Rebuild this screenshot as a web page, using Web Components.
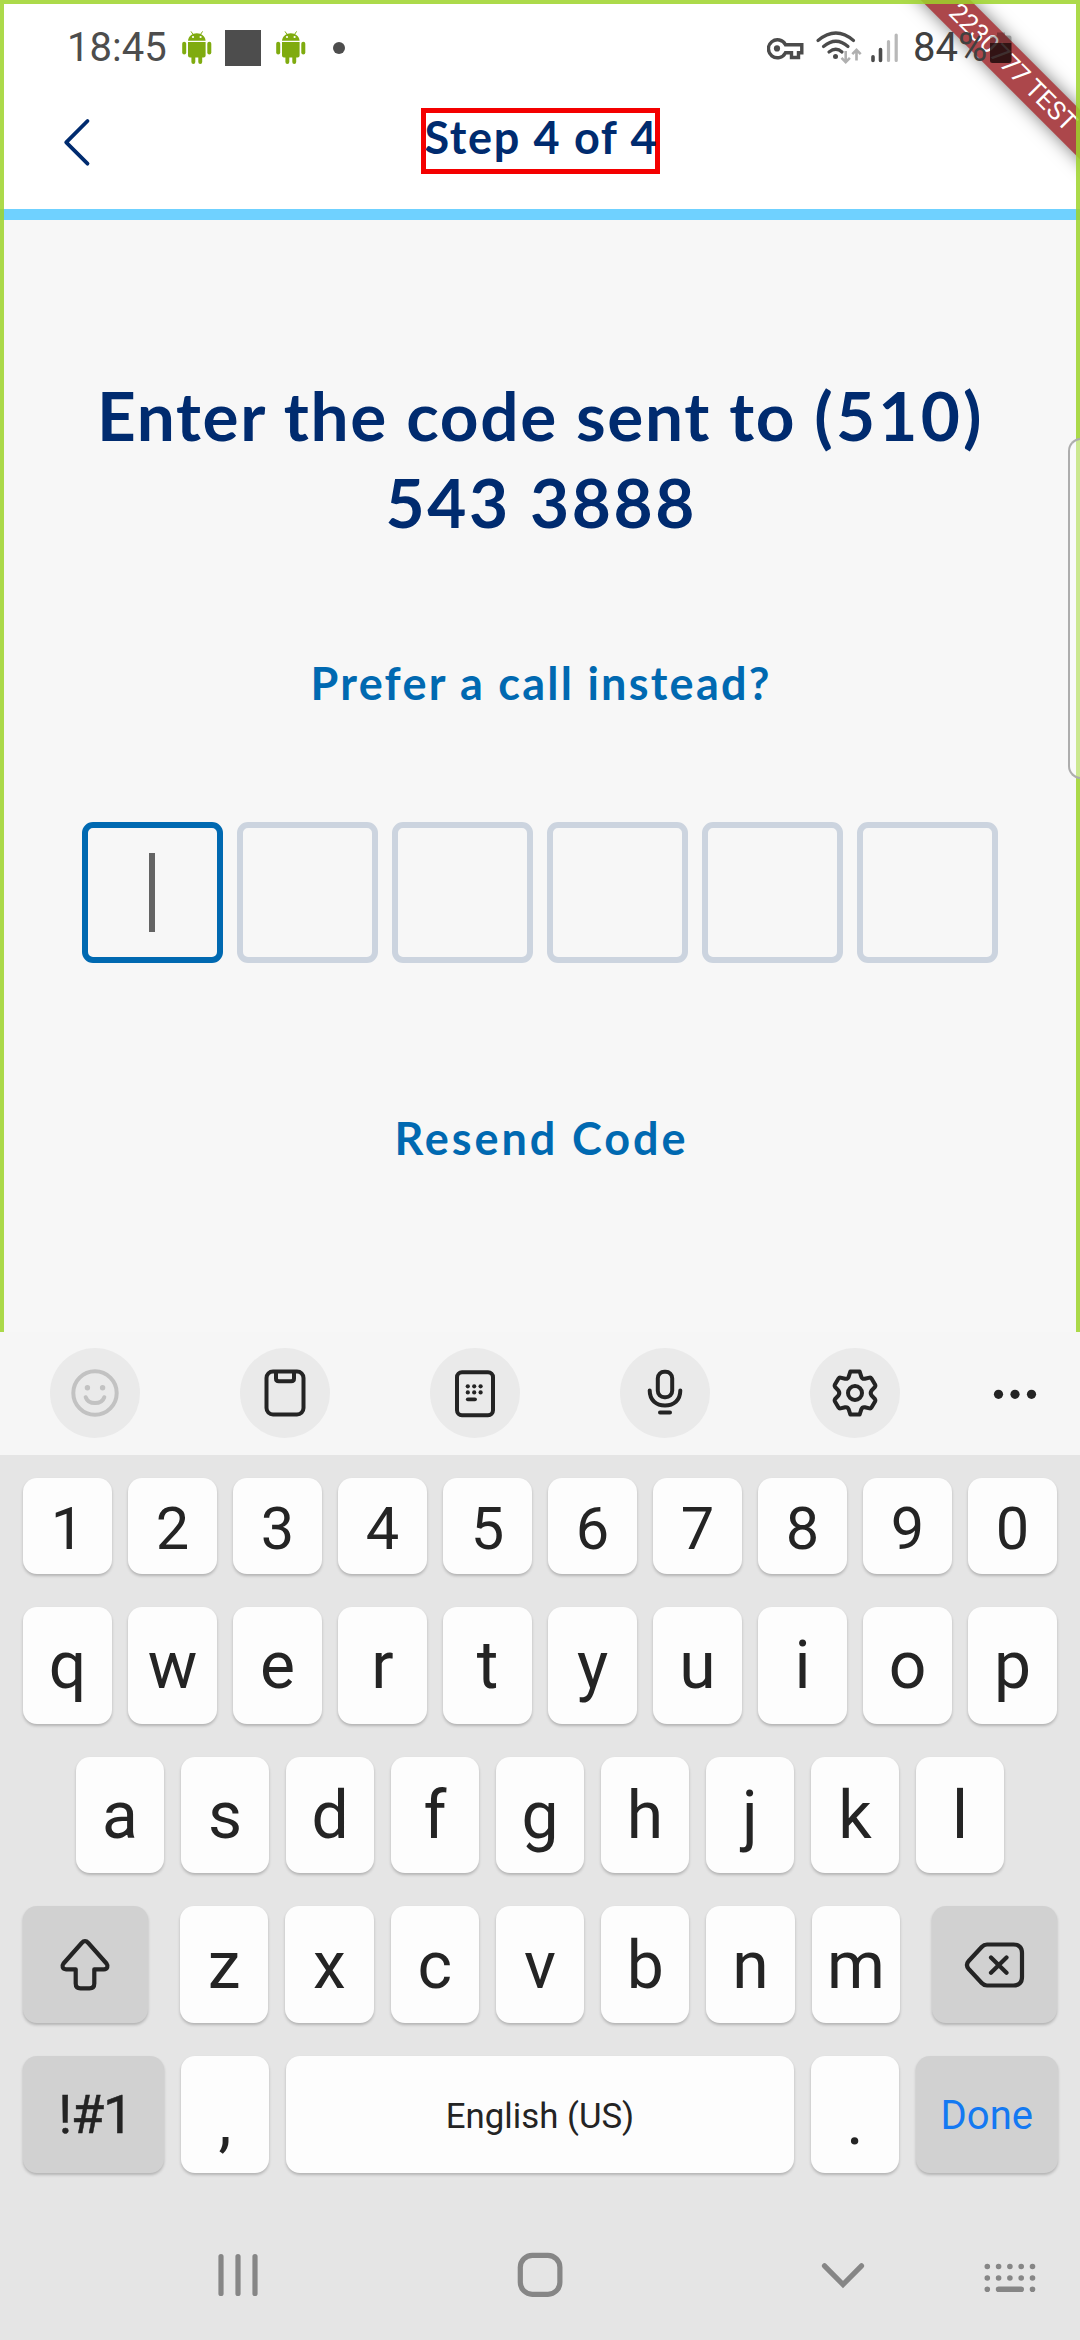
<!DOCTYPE html>
<html lang="en">
<head>
<meta charset="utf-8">
<title>Verification code</title>
<style>
html,body{margin:0;padding:0;background:#e5e5e5}
body{width:1080px;height:2340px;overflow:hidden;font-family:Roboto,"Liberation Sans",sans-serif}
</style>
</head>
<body>
<phone-screen></phone-screen>
<script>
const define = (name, html, setup) => {
  const t = document.createElement('template');
  t.innerHTML = html;
  customElements.define(name, class extends HTMLElement {
    connectedCallback() {
      if (this.shadowRoot) return;
      this.attachShadow({mode: 'open'}).appendChild(t.content.cloneNode(true));
      if (setup) setup(this, this.shadowRoot);
    }
  });
};

/* One line of brand type, tracked out to a given width. */
define('brand-text', `
<style>
:host{display:block;white-space:nowrap;font-family:Lato,"Open Sans",sans-serif;font-weight:700;text-align:center}
span{display:inline-block;letter-spacing:var(--track,0px)}
</style><span><slot></slot></span>`, (el, root) => {
  const span = root.querySelector('span');
  const n = el.textContent.length - 1;
  const s = (Number(el.getAttribute('width')) - span.getBoundingClientRect().width) / n;
  span.style.setProperty('--track', s + 'px');
  span.style.marginRight = -s + 'px';
});

define('android-icon', `
<style>:host{display:block;width:30px;height:34px}svg{display:block}</style>
<svg width="30" height="34" viewBox="0 0 30 34" fill="#7fab0f">
<path d="M6 9.8C6.3 5.400 10 2.200 14.800 2.200s8.500 3.200 8.800 7.600z"/>
<path d="M9 .4l2 3M20.600 .4l-2 3" stroke="#7fab0f" stroke-width="1"/>
<circle cx="11" cy="6" r="1.100" fill="#fff"/><circle cx="18.600" cy="6" r="1.100" fill="#fff"/>
<path d="M6 11h17.600v13.500a2 2 0 0 1-2 2h-1.400v4.600a1.900 1.900 0 0 1-3.900 0v-4.600h-3v4.600a1.900 1.900 0 0 1-3.900 0v-4.600H8a2 2 0 0 1-2-2z"/>
<rect x=".2" y="10.800" width="4" height="12.600" rx="2"/><rect x="25.300" y="10.800" width="4" height="12.600" rx="2"/>
</svg>`);

define('status-bar', `
<style>
:host{display:flex;position:relative;z-index:2;height:96px;align-items:center;padding-left:67px;box-sizing:border-box;color:#4d4d4d;font-size:40px;line-height:96px}
svg{display:block;flex:none}
.time{width:100px}.a{margin-left:15px}.sq{width:36px;height:36px;background:#4d4d4d;margin-left:13px}
.dot{width:12px;height:12px;border-radius:50%;background:#4d4d4d;margin-left:27px}
.net{margin-left:422px}.pct{margin-left:15px;width:75px;color:#404040}
.bat{margin-left:1.500px}
</style>
<div class="time">18:45</div>
<android-icon class="a"></android-icon><div class="sq"></div><android-icon class="a"></android-icon><div class="dot"></div>
<svg class="net" width="131" height="96" viewBox="767 0 131 96" fill="none" stroke="#4b4b4b">
<path d="M785.500 44.800A9 9 0 1 0 785.500 52.800H791.500V57.500H798.500V52.800H801.800V44.800Z" stroke-width="3.400"/>
<circle cx="777" cy="48.400" r="3.100" fill="#4b4b4b" stroke="none"/>
<path d="M818 40.500Q836 25.500 853.500 40.500M823.500 46.500Q836 36 848 46.500M829 52Q836 46.500 842 52" stroke-width="3.200" stroke-linecap="round"/>
<circle cx="835.500" cy="56.500" r="2.500" fill="#4b4b4b" stroke="none"/>
<path d="M845.700 51v11M841.500 57.800l4.200 4.300l4.200-4.300M856.500 60.500v-11M852.300 54.200l4.200-4.300l4.200 4.300" stroke="#b0b0b0" stroke-width="2.600"/>
<path d="M873 56.800v3.600M880.500 49.500v10.900" stroke-width="3.600" stroke-linecap="round"/>
<path d="M888.500 41.500v18.900M896.200 35v25.400" stroke="#b8b8b8" stroke-width="3.200" stroke-linecap="round"/>
</svg>
<div class="pct">84%</div>
<svg class="bat" width="24" height="96" viewBox="992 0 24 96">
<path d="M992 43v-5.500q0-2 2-2h5v-3h8v3h4.500q2 0 2 2v5.500z" fill="#000" opacity=".28"/>
<path d="M992 43h21.500v17.500q0 2.500-2.500 2.500h-16.500q-2.500 0-2.500-2.500z" fill="#1c0a0b" opacity=".85"/>
</svg>`);

define('build-ribbon', `
<style>
:host{position:absolute;z-index:1;right:0;top:0;width:240px;height:200px;overflow:hidden}
div{position:absolute;left:3px;top:50px;width:340px;height:35px;line-height:35px;transform:rotate(45deg);background:#ac474b;box-shadow:0 0 17px rgba(0,0,0,.5);color:#fff;font-size:25.800px;text-align:center;white-space:nowrap}
</style><div><slot></slot></div>`);

define('app-header', `
<style>
:host{display:flex;height:113px;align-items:flex-start;box-sizing:border-box;padding-left:60px}
svg{display:block;margin-top:19px}
.title{margin-left:325.500px;margin-top:12px;width:239px;height:66px;box-sizing:border-box;border:5px solid #f40000;color:#002b6f;font-size:45px;line-height:48px}
brand-text{margin-left:-1px}
</style>
<svg width="35" height="56" viewBox="60 115 35 56" fill="none" stroke="#002b6f" stroke-width="3.800" stroke-linecap="round" stroke-linejoin="round"><path d="M87.500 121L66.200 142.300L87.500 163.700"/></svg>
<div class="title"><brand-text width="232">Step 4 of 4</brand-text></div>`);

define('code-cell', `
<style>
:host{display:flex;flex:1;height:141px;box-sizing:border-box;border:6px solid #ccd4df;border-radius:11px;align-items:center;justify-content:center}
:host([active]){border-color:#0069b1}
i{display:none;width:6px;height:79px;background:#646464;margin-right:1px}
:host([active]) i{display:block}
</style><i></i>`);

define('verify-screen', `
<style>
:host{display:flex;flex-direction:column;height:1112px;background:#f7f7f7;border-top:11px solid #6fd1ff;color:#0069b1;box-sizing:content-box}
h1{margin:152px 0 0;font-size:67.500px;line-height:86.500px;color:#002b6f;font-weight:700}
h1 b{font-weight:inherit;letter-spacing:calc(var(--track,0px) + 1.500px)}
.l{font-size:45px;line-height:60px}
.call{margin-top:108px}
.cells{display:flex;gap:14.500px;margin:109px 82px 0 82.300px}
.resend{margin-top:145px}
</style>
<h1><brand-text width="886">Enter the code sent to <b>(510)</b></brand-text><brand-text width="309">543 3888</brand-text></h1>
<brand-text class="l call" width="459">Prefer a call instead?</brand-text>
<div class="cells"><code-cell active></code-cell><code-cell></code-cell><code-cell></code-cell><code-cell></code-cell><code-cell></code-cell><code-cell></code-cell></div>
<brand-text class="l resend" width="291">Resend Code</brand-text>`);

define('tool-button', `
<style>:host{display:block;width:90px;height:90px;border-radius:50%;background:#eaeaea}</style><slot></slot>`);

define('key-toolbar', `
<style>
:host{display:flex;height:123px;box-sizing:border-box;padding:16px 0 0 50px;gap:100px;background:#f6f6f6}
svg{display:block;fill:none;stroke:#242424;stroke-width:4;stroke-linecap:round;stroke-linejoin:round}
.f{fill:#242424;stroke:none}
.more{margin-left:-10px}
</style>
<tool-button><svg width="90" height="90" viewBox="-45 -45 90 90" style="stroke:#c2c2c2"><circle r="21.700"/><path d="M-9.300 4.200C-6.500 12 6.500 12 9.300 4.200"/><g fill="#c2c2c2" stroke="none"><circle cx="-7.600" cy="-5.200" r="2.700"/><circle cx="7.600" cy="-5.200" r="2.700"/></g></svg></tool-button>
<tool-button><svg width="90" height="90" viewBox="-45 -45 90 90"><rect x="-18.500" y="-21.500" width="37" height="43" rx="6.500"/><path d="M-9 -21V-14.500Q-9 -11.700-6.200 -11.700H6.200Q9 -11.700 9 -14.500V-21"/></svg></tool-button>
<tool-button><svg width="90" height="90" viewBox="-45 -45 90 90"><rect x="-18" y="-20.800" width="36" height="43" rx="5"/><path d="M-7.200 6.300H0" stroke-width="3.800"/><g class="f"><circle cx="-7.200" cy="-6.700" r="2.100"/><circle cx="-.8" cy="-6.700" r="2.100"/><circle cx="5.600" cy="-6.700" r="2.100"/><circle cx="-7.200" cy="-.6" r="2.100"/><circle cx="-.8" cy="-.6" r="2.100"/><circle cx="5.600" cy="-.6" r="2.100"/></g></svg></tool-button>
<tool-button><svg width="90" height="90" viewBox="-45 -45 90 90"><rect x="-7.200" y="-21.300" width="14.400" height="25.500" rx="6.500"/><path d="M-15.300 -2.500C-15.300 7.500-8.500 12.400 0 12.400S15.300 7.500 15.300 -2.500M-5 19.600H5"/></svg></tool-button>
<tool-button><svg width="90" height="90" viewBox="-45 -45 90 90" stroke-width="3.800"><circle r="7"/><path d="M-4.600 -21.600H4.600L6.300 -16.300Q7.300 -13.800 9.800 -14.200L14.600 -15.400Q15.800 -15.600 16.500 -14.500L20.200 -8.300Q20.700 -7.200 20 -6.200L16.500 -2.300Q14.900 0 16.500 2.300L20 6.200Q20.700 7.200 20.200 8.300L16.500 14.500Q15.800 15.600 14.600 15.400L9.800 14.200Q7.300 13.800 6.300 16.300L4.600 21.600H-4.600L-6.300 16.300Q-7.300 13.800-9.800 14.200L-14.600 15.400Q-15.800 15.600-16.500 14.500L-20.200 8.300Q-20.700 7.200-20 6.200L-16.500 2.300Q-14.900 0-16.500 -2.300L-20 -6.200Q-20.700 -7.200-20.200 -8.300L-16.500 -14.500Q-15.800 -15.600-14.600 -15.400L-9.800 -14.200Q-7.300 -13.800-6.300 -16.300Z"/></svg></tool-button>
<svg class="more" width="50" height="90" viewBox="-25 -45 50 90"><g class="f"><circle cx="-16.500" cy="1.300" r="4.600"/><circle cy="1.300" r="4.600"/><circle cx="16.500" cy="1.300" r="4.600"/></g></svg>`);

define('key-cap', `
<style>
:host{display:flex;flex:1;justify-content:center;align-items:center;box-sizing:border-box;padding-top:var(--drop,2px);background:#fdfdfd;border-radius:14px;box-shadow:0 2px 3px rgba(0,0,0,.22);color:#242424;white-space:nowrap}
:host([dark]){background:#d1d1d1}
</style><slot></slot>`);

define('key-row', `
<style>:host{display:flex;gap:16px}</style><slot></slot>`, el => {
  const keys = el.getAttribute('keys');
  if (keys) for (const k of keys) {
    const cap = document.createElement('key-cap');
    cap.textContent = k;
    el.insertBefore(cap, el.querySelector('[data-end]'));
  }
});

define('soft-keyboard', `
<style>
:host{display:flex;flex-direction:column;height:776px;background:#e5e5e5;padding-top:22.500px;box-sizing:border-box;gap:33px}
key-row{margin:0 23px;height:116.700px;font-size:66px;line-height:80px;flex:none}
.num{height:96.500px;font-size:59.500px;--drop:7px}
.home{margin:0 76px;gap:17px}
.low{margin:0 22.500px;gap:17px}
.side{flex:none;width:125.500px;--drop:0px}
svg{display:block;fill:none;stroke:#242424;stroke-width:4.200;stroke-linecap:round;stroke-linejoin:round}
.shift{margin-right:15px}.bk{margin-left:15px}
.wide{flex:none;width:141.500px}
.p{flex:none;width:88px;--drop:15px}
.sym span{font-size:54px;letter-spacing:-1.200px;padding-left:4px;-webkit-text-stroke:.5px #242424}
.space{font-size:34.800px;--drop:3px}
.done{font-size:40px;color:#1479f2;--drop:4px}
</style>
<key-row class="num" keys="1234567890"></key-row>
<key-row keys="qwertyuiop"></key-row>
<key-row class="home" keys="asdfghjkl"></key-row>
<key-row class="low" keys="zxcvbnm">
<key-cap dark class="side shift"><svg width="60" height="60" viewBox="-30 -30 60 60"><path d="M-3.300 -22Q0 -25.600 3.300 -22L21.500 -1.500Q23 .5 22.300 2.300Q21.500 4.300 19 4.300H9.300V18.500Q9.300 23.300 4.500 23.300H-4.500Q-9.300 23.300-9.300 18.500V4.300H-19Q-21.500 4.300-22.300 2.300Q-23 .5-21.500 -1.500Z"/></svg></key-cap>
<key-cap dark class="side bk" data-end><svg width="64" height="60" viewBox="-32 -30 64 60"><path d="M-8 -20.500H18.500Q27 -20.500 27 -12V12Q27 20.500 18.500 20.500H-8Q-11 20.500-13.300 18L-26.300 4Q-29.800 0-26.300 -4L-13.300 -18Q-11 -20.500-8 -20.500ZM-4 -7.500L11.500 7.800M11.500 -7.500L-4 7.800"/></svg></key-cap>
</key-row>
<key-row class="low">
<key-cap dark class="wide sym"><span>!#1</span></key-cap><key-cap class="p">,</key-cap><key-cap class="space">English (US)</key-cap><key-cap class="p">.</key-cap><key-cap dark class="wide done">Done</key-cap>
</key-row>`);

define('nav-bar', `
<style>
:host{display:flex;height:109px;padding:14px 0 0 208px;box-sizing:border-box;background:#e5e5e5;align-items:flex-start}
svg{display:block;fill:none;stroke:#868686;stroke-width:5.200;stroke-linecap:round}
</style>
<svg width="60" height="60" viewBox="208 2245 60 60"><path d="M221 2256.500V2293.500M238 2256.500V2293.500M255 2256.500V2293.500"/></svg>
<svg width="60" height="60" viewBox="510 2245 60 60" style="margin-left:242px"><rect x="520.300" y="2255.300" width="39.600" height="39" rx="12"/></svg>
<svg width="60" height="60" viewBox="813 2245 60 60" style="margin-left:243px"><path d="M824.500 2265.800L843 2284.500L861.500 2265.800"/></svg>
<svg width="60" height="60" viewBox="980 2245 60 60" style="margin-left:107px"><g style="stroke-width:5.600"><path d="M987.300 2266.500h0M998.600 2266.500h0M1009.900 2266.500h0M1021.200 2266.500h0M1032.500 2266.500h0M987.300 2278h0M998.600 2278h0M1009.900 2278h0M1021.200 2278h0M1032.500 2278h0M987.300 2289.200h0M998.600 2289.200H1021.200M1032.500 2289.200h0"/></g></svg>`);

define('screen-frame', `
<style>
:host{position:absolute;z-index:3;inset:0 0 auto 0;height:1332px;border:4px solid rgba(158,211,42,.85);border-bottom:0;box-sizing:border-box;pointer-events:none}
i{position:absolute;right:-6px;top:434px;width:18px;height:341px;box-sizing:border-box;border:2.500px solid #adadad;border-radius:13px 0 0 13px;border-right:0;background:rgba(255,255,255,.4)}
div{position:absolute;right:-4px;top:0;width:20px;height:1000px;overflow:hidden}
</style><div><i></i></div>`);

define('phone-screen', `
<style>
:host{display:flex;flex-direction:column;position:relative;width:1080px;height:2340px;overflow:hidden;background:#fff}
nav-bar{flex:1}
</style>
<status-bar></status-bar>
<build-ribbon>2230777 TEST</build-ribbon>
<app-header></app-header>
<verify-screen></verify-screen>
<key-toolbar></key-toolbar>
<soft-keyboard></soft-keyboard>
<nav-bar></nav-bar>
<screen-frame></screen-frame>`);
</script>
</body>
</html>
